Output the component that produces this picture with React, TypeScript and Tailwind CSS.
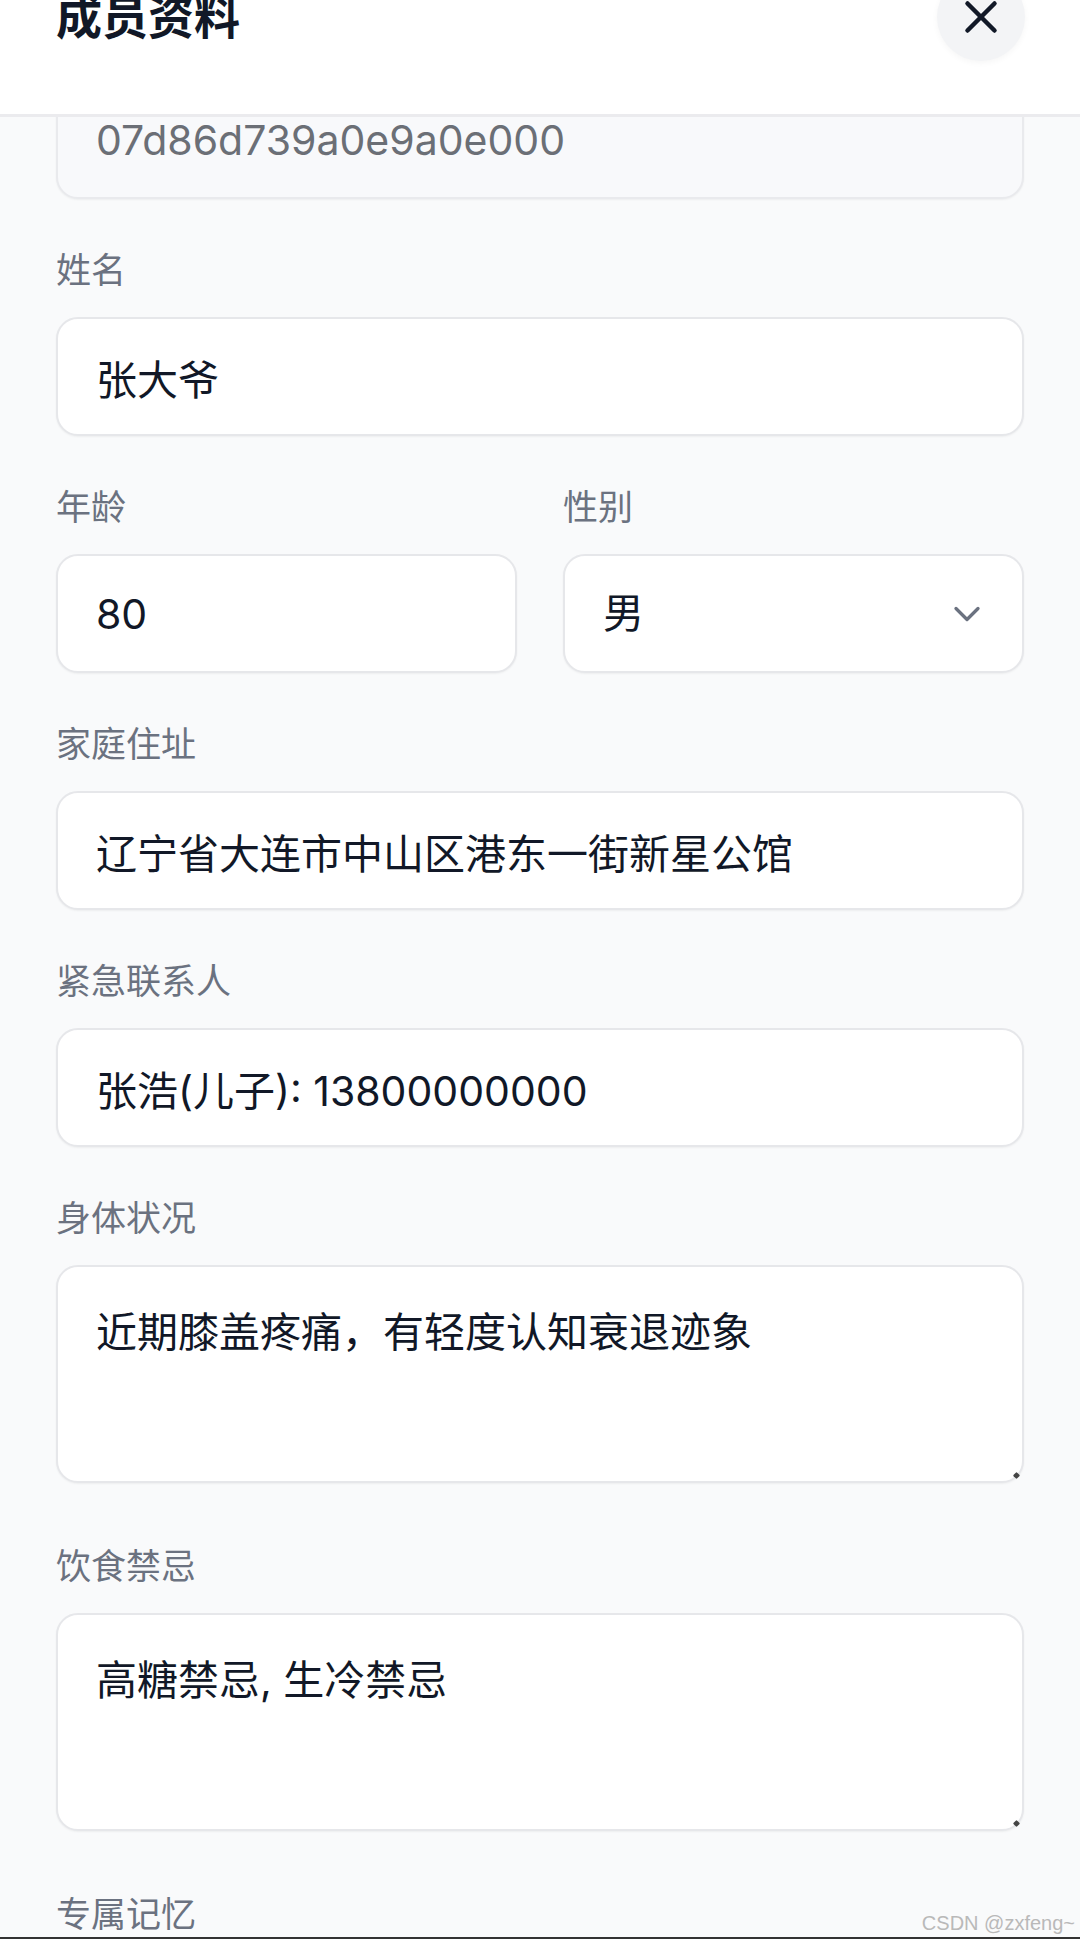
import { ChevronDown, X } from 'lucide-react';
import type { ReactNode } from 'react';

const inputBase =
  'w-full rounded-[22px] border-2 border-[#e6e7ea] bg-white px-[38px] text-[41px] text-[#111827] shadow-[0_1px_2px_rgba(0,0,0,0.05)] outline-none';

function Label({ children }: { children: ReactNode }) {
  return <label className="block text-[35px] leading-[48px] text-[#6b7280]">{children}</label>;
}

function Field({ label, children }: { label: string; children: ReactNode }) {
  return (
    <div className="flex flex-col gap-[23px]">
      <Label>{label}</Label>
      {children}
    </div>
  );
}

function TextInput({ value }: { value: string }) {
  return <input readOnly value={value} className={`h-[119px] ${inputBase}`} />;
}

function TextArea({ value }: { value: string }) {
  return (
    <div className="relative mb-[12px]">
      <textarea
        readOnly
        value={value}
        className={`block h-[218px] resize-none pt-[38px] leading-[54px] ${inputBase}`}
      />
      <span className="absolute bottom-[5px] right-[5px] size-[5px] rotate-45 rounded-[1px] bg-[#444]" />
    </div>
  );
}

export default function App() {
  return (
    <div className="relative flex h-[1939px] w-full flex-col overflow-hidden bg-[#f9fafb] font-['Inter','Noto_Sans_CJK_SC',sans-serif]">
      <header className="h-[117px] shrink-0 overflow-hidden border-b-[3px] border-[#ebebee] bg-white">
        <div className="-mt-[27px] flex h-[88px] items-center justify-between pl-[56px] pr-[55px]">
          <h1 className="text-[46px] font-bold leading-none text-[#111827]">成员资料</h1>
          <button className="flex size-[88px] items-center justify-center rounded-full bg-[#f3f4f6] shadow-[0_2px_6px_rgba(0,0,0,0.04)]">
            <X size={54} strokeWidth={2} className="text-[#111827]" />
          </button>
        </div>
      </header>

      <main className="flex flex-1 flex-col gap-[47px] overflow-hidden px-[56px]">
        <input
          readOnly
          value="07d86d739a0e9a0e000"
          className="-mt-[37px] h-[119px] w-full shrink-0 rounded-[22px] border-2 border-[#e9eaed] bg-[#f8f9fb] px-[38px] text-[41px] text-[#6b6f76] shadow-[0_1px_2px_rgba(0,0,0,0.05)] outline-none"
        />

        <Field label="姓名">
          <TextInput value="张大爷" />
        </Field>

        <div className="grid grid-cols-2 gap-[46px]">
          <Field label="年龄">
            <TextInput value="80" />
          </Field>
          <Field label="性别">
            <div className={`flex h-[119px] items-center justify-between pr-[33px] ${inputBase}`}>
              <span>男</span>
              <ChevronDown size={44} strokeWidth={1.8} className="text-[#6b7280]" />
            </div>
          </Field>
        </div>

        <Field label="家庭住址">
          <TextInput value="辽宁省大连市中山区港东一街新星公馆" />
        </Field>

        <Field label="紧急联系人">
          <TextInput value="张浩(儿子): 13800000000" />
        </Field>

        <Field label="身体状况">
          <TextArea value="近期膝盖疼痛，有轻度认知衰退迹象" />
        </Field>

        <Field label="饮食禁忌">
          <TextArea value="高糖禁忌, 生冷禁忌" />
        </Field>

        <Field label="专属记忆">
          <TextArea value="" />
        </Field>
      </main>

      <span className="absolute bottom-[4px] right-[5px] font-['Liberation_Sans',sans-serif] text-[20px] leading-[24px] text-[#b9b9b9]">
        CSDN @zxfeng~
      </span>
      <div className="absolute inset-x-0 bottom-0 h-[2px] bg-[#333333]" />
    </div>
  );
}
